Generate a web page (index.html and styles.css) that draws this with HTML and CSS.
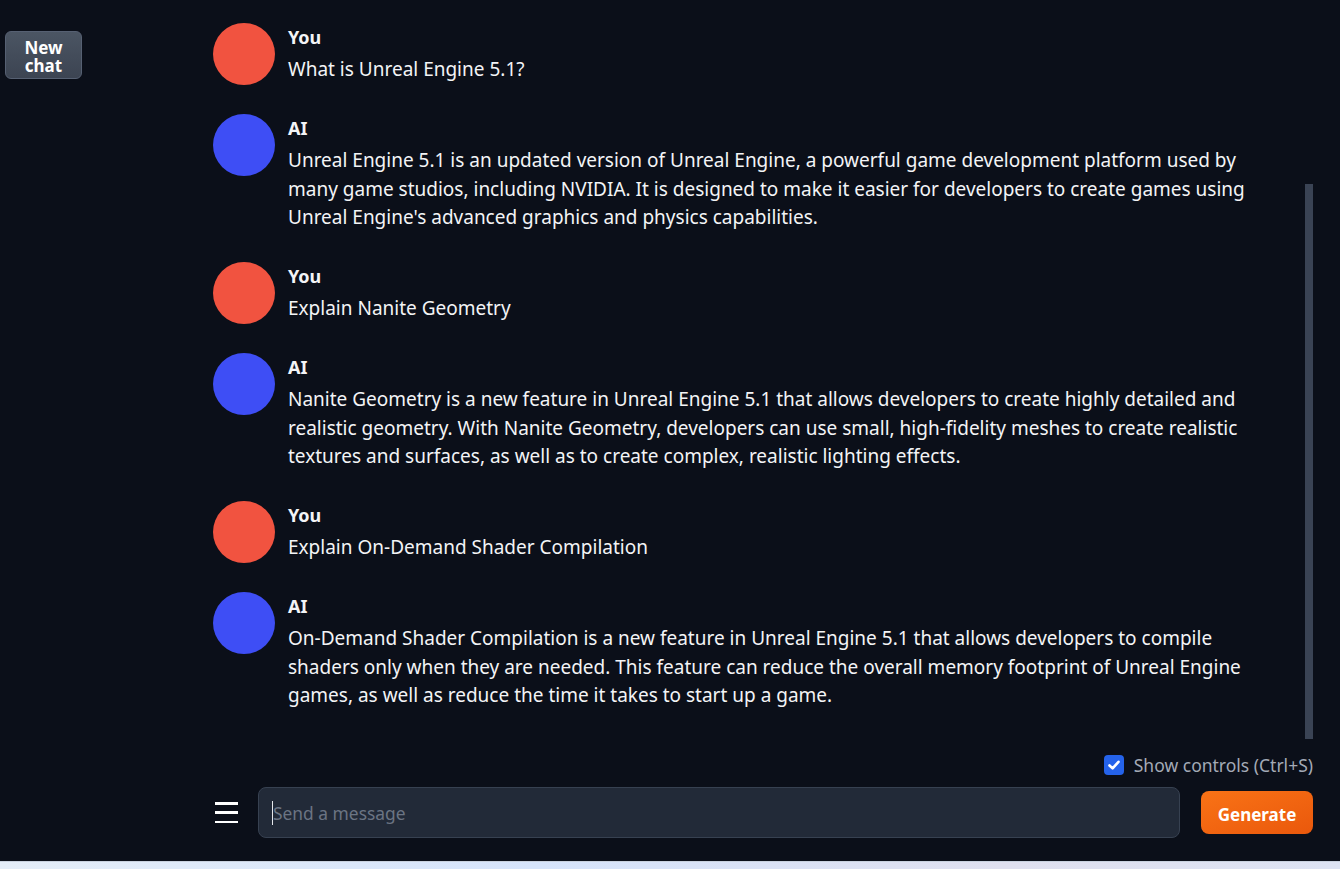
FILE: index.html
```html
<!DOCTYPE html>
<html lang="en">
<head>
<meta charset="utf-8">
<title>Chat</title>
<link rel="stylesheet" href="styles.css">
</head>
<body>
<div class="app">
  <aside class="sidebar">
    <button class="new-chat">New chat</button>
  </aside>
  <main class="main">
    <section class="chat">
      <div class="message">
        <div class="avatar user"></div>
        <div class="body">
          <div class="name">You</div>
          <p class="text">What is Unreal Engine 5.1?</p>
        </div>
      </div>
      <div class="message">
        <div class="avatar ai"></div>
        <div class="body">
          <div class="name">AI</div>
          <p class="text">Unreal Engine 5.1 is an updated version of Unreal Engine, a powerful game development platform used by many game studios, including NVIDIA. It is designed to make it easier for developers to create games using Unreal Engine's advanced graphics and physics capabilities.</p>
        </div>
      </div>
      <div class="message">
        <div class="avatar user"></div>
        <div class="body">
          <div class="name">You</div>
          <p class="text">Explain Nanite Geometry</p>
        </div>
      </div>
      <div class="message">
        <div class="avatar ai"></div>
        <div class="body">
          <div class="name">AI</div>
          <p class="text">Nanite Geometry is a new feature in Unreal Engine 5.1 that allows developers to create highly detailed and realistic geometry. With Nanite Geometry, developers can use small, high-fidelity meshes to create realistic textures and surfaces, as well as to create complex, realistic lighting effects.</p>
        </div>
      </div>
      <div class="message">
        <div class="avatar user"></div>
        <div class="body">
          <div class="name">You</div>
          <p class="text">Explain On-Demand Shader Compilation</p>
        </div>
      </div>
      <div class="message">
        <div class="avatar ai"></div>
        <div class="body">
          <div class="name">AI</div>
          <p class="text">On-Demand Shader Compilation is a new feature in Unreal Engine 5.1 that allows developers to compile shaders only when they are needed. This feature can reduce the overall memory footprint of Unreal Engine games, as well as reduce the time it takes to start up a game.</p>
        </div>
      </div>
      <div class="scroll-thumb"></div>
    </section>
    <div class="controls">
      <label class="toggle">
        <span class="checkbox">
          <svg viewBox="0 0 20 20" width="20" height="20"><path d="M5.5 10.5 L8.6 13.4 L14.5 6.8" fill="none" stroke="#fff" stroke-width="2.6" stroke-linecap="round" stroke-linejoin="round"/></svg>
        </span>
        <span class="toggle-label">Show controls (Ctrl+S)</span>
      </label>
    </div>
    <div class="input-row">
      <button class="menu" aria-label="Menu">
        <span></span><span></span><span></span>
      </button>
      <div class="input"><span class="caret"></span><span class="placeholder">Send a message</span></div>
      <button class="generate">Generate</button>
    </div>
  </main>
</div>
<div class="footer-strip"></div>
</body>
</html>
```

FILE: styles.css
```css
html, body {
  margin: 0;
  padding: 0;
  background: #0b0f19;
  height: 100%;
  overflow: hidden;
}

body {
  font-family: "Noto Sans", "Open Sans", sans-serif;
  color: #f3f4f6;
}

.app {
  display: flex;
  height: 861px;
}

.sidebar {
  width: 213px;
  flex: none;
  padding: 31px 0 0 5px;
  box-sizing: border-box;
}

.new-chat {
  width: 77px;
  height: 48px;
  padding: 3px 0 0;
  border: 1px solid #566072;
  border-radius: 6px;
  background: linear-gradient(180deg, #4b5563 0%, #3c4452 100%);
  color: #fff;
  font-family: inherit;
  font-weight: 700;
  font-size: 17px;
  line-height: 18px;
  text-align: center;
}

.main {
  width: 1100px;
  flex: none;
  display: flex;
  flex-direction: column;
}

.chat {
  position: relative;
  flex: 1;
  overflow: hidden;
  padding: 23px 43px 0 0;
}

.message {
  display: flex;
  gap: 13px;
  margin-bottom: 28px;
}

.avatar {
  width: 62px;
  height: 62px;
  border-radius: 50%;
  flex: none;
}

.avatar.user { background: #f15340; }
.avatar.ai { background: #3e4ef5; }

.body {
  flex: 1;
  min-width: 0;
}

.name {
  font-weight: 700;
  font-size: 18px;
  line-height: 28px;
  margin-bottom: 4px;
}

.text {
  margin: 0 0 2.5px;
  font-size: 19px;
  line-height: 28.5px;
}

.scroll-thumb {
  position: absolute;
  right: 0;
  top: 184px;
  width: 8px;
  height: 555px;
  background: #3a4354;
}

.controls {
  display: flex;
  justify-content: flex-end;
  height: 20px;
  padding: 10px 0 12px;
}

.toggle {
  display: flex;
  align-items: center;
  gap: 10px;
}

.checkbox {
  width: 20px;
  height: 20px;
  border-radius: 4px;
  background: #2563eb;
  display: block;
}

.checkbox svg { display: block; }

.toggle-label {
  color: #a3aab6;
  font-size: 17.5px;
  line-height: 20px;
}

.input-row {
  display: flex;
  align-items: center;
  height: 51px;
  padding-bottom: 23px;
}

.menu {
  width: 23px;
  height: 21px;
  margin-left: 2px;
  padding: 0;
  border: none;
  background: none;
  display: flex;
  flex-direction: column;
  justify-content: space-between;
  align-items: stretch;
  flex: none;
}

.menu span {
  display: block;
  height: 2.5px;
  background: #ffffff;
}

.input {
  margin-left: 20px;
  width: 922px;
  height: 51px;
  box-sizing: border-box;
  border: 1px solid #374151;
  border-radius: 8px;
  background: #222a38;
  display: flex;
  align-items: center;
  padding-left: 13px;
}

.caret {
  width: 1px;
  height: 24px;
  background: #e5e7eb;
}

.placeholder {
  color: #6b7483;
  font-size: 17.4px;
  line-height: 24px;
}

.generate {
  margin-left: 21px;
  width: 112px;
  height: 43px;
  border: none;
  border-radius: 8px;
  background: linear-gradient(160deg, #f97316 0%, #ea580c 100%);
  color: #fff;
  font-family: inherit;
  font-weight: 700;
  font-size: 17px;
  padding: 3px 0 0;
}

.footer-strip {
  height: 8px;
  border-top: 1px solid #c9d2df;
  background: linear-gradient(90deg, #e4edf8 0%, #d6e4fb 40%, #dfe0ef 75%, #dde3f3 100%);
}
```
